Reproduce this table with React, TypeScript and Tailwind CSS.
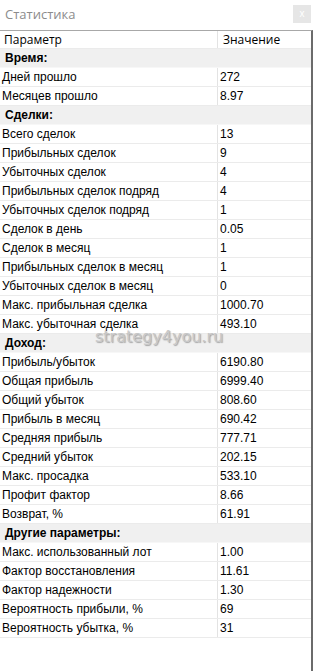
type Row = { label: string; value?: string; group?: boolean };

const rows: Row[] = [
  { label: "Время:", group: true },
  { label: "Дней прошло", value: "272" },
  { label: "Месяцев прошло", value: "8.97" },
  { label: "Сделки:", group: true },
  { label: "Всего сделок", value: "13" },
  { label: "Прибыльных сделок", value: "9" },
  { label: "Убыточных сделок", value: "4" },
  { label: "Прибыльных сделок подряд", value: "4" },
  { label: "Убыточных сделок подряд", value: "1" },
  { label: "Сделок в день", value: "0.05" },
  { label: "Сделок в месяц", value: "1" },
  { label: "Прибыльных сделок в месяц", value: "1" },
  { label: "Убыточных сделок в месяц", value: "0" },
  { label: "Макс. прибыльная сделка", value: "1000.70" },
  { label: "Макс. убыточная сделка", value: "493.10" },
  { label: "Доход:", group: true },
  { label: "Прибыль/убыток", value: "6190.80" },
  { label: "Общая прибыль", value: "6999.40" },
  { label: "Общий убыток", value: "808.60" },
  { label: "Прибыль в месяц", value: "690.42" },
  { label: "Средняя прибыль", value: "777.71" },
  { label: "Средний убыток", value: "202.15" },
  { label: "Макс. просадка", value: "533.10" },
  { label: "Профит фактор", value: "8.66" },
  { label: "Возврат, %", value: "61.91" },
  { label: "Другие параметры:", group: true },
  { label: "Макс. использованный лот", value: "1.00" },
  { label: "Фактор восстановления", value: "11.61" },
  { label: "Фактор надежности", value: "1.30" },
  { label: "Вероятность прибыли, %", value: "69" },
  { label: "Вероятность убытка, %", value: "31" },
];

export default function App() {
  return (
    <div className="relative w-[313px] h-[671px] bg-white overflow-hidden font-['Liberation_Sans',Arial,sans-serif] text-[12px] text-black">
      {/* title bar */}
      <div className="flex items-center justify-between h-[30px] pl-[5px] pr-[2px]">
        <span className="text-[13px] text-[#8c8c8c] font-['Open_Sans',sans-serif] -mt-[1px]">Статистика</span>
        <div className="w-[18px] h-[18px] bg-[#e6e6e6] flex items-center justify-center text-white text-[10px] leading-none -mt-[2px]">
          x
        </div>
      </div>

      {/* table */}
      <div className="border-t border-[#a8a8a8] border-r-2 border-r-[#6b6b6b] h-[641px]">
        <div className="flex h-[18px] items-center border-b border-[#ebebeb]">
          <div className="w-[218px] pl-[4px] border-r border-[#e3e3e3] h-full flex items-center font-['Open_Sans',sans-serif] text-[12px]">
            Параметр
          </div>
          <div className="flex-1 pl-[5px] font-['Open_Sans',sans-serif] text-[12px]">Значение</div>
        </div>
        {rows.map((r) =>
          r.group ? (
            <div key={r.label} className="flex h-[19px] items-center bg-[#f0f0f0] border-b border-[#f7f7f7]">
              <div className="pl-[5px] font-bold">{r.label}</div>
            </div>
          ) : (
            <div key={r.label} className="flex h-[19px] border-b border-[#ebebeb]">
              <div className="w-[218px] pl-[2px] border-r border-[#e3e3e3] flex items-center">{r.label}</div>
              <div className="flex-1 pl-[2px] flex items-center">{r.value}</div>
            </div>
          )
        )}
      </div>

      {/* watermark */}
      <div className="absolute left-[95px] top-[327px] leading-[20px] text-[16px] text-[#c4c4c4] font-['DejaVu_Sans',sans-serif] [text-shadow:1px_1px_1px_rgba(90,90,90,0.55)] pointer-events-none opacity-90">
        strategy4you.ru
      </div>
    </div>
  );
}
